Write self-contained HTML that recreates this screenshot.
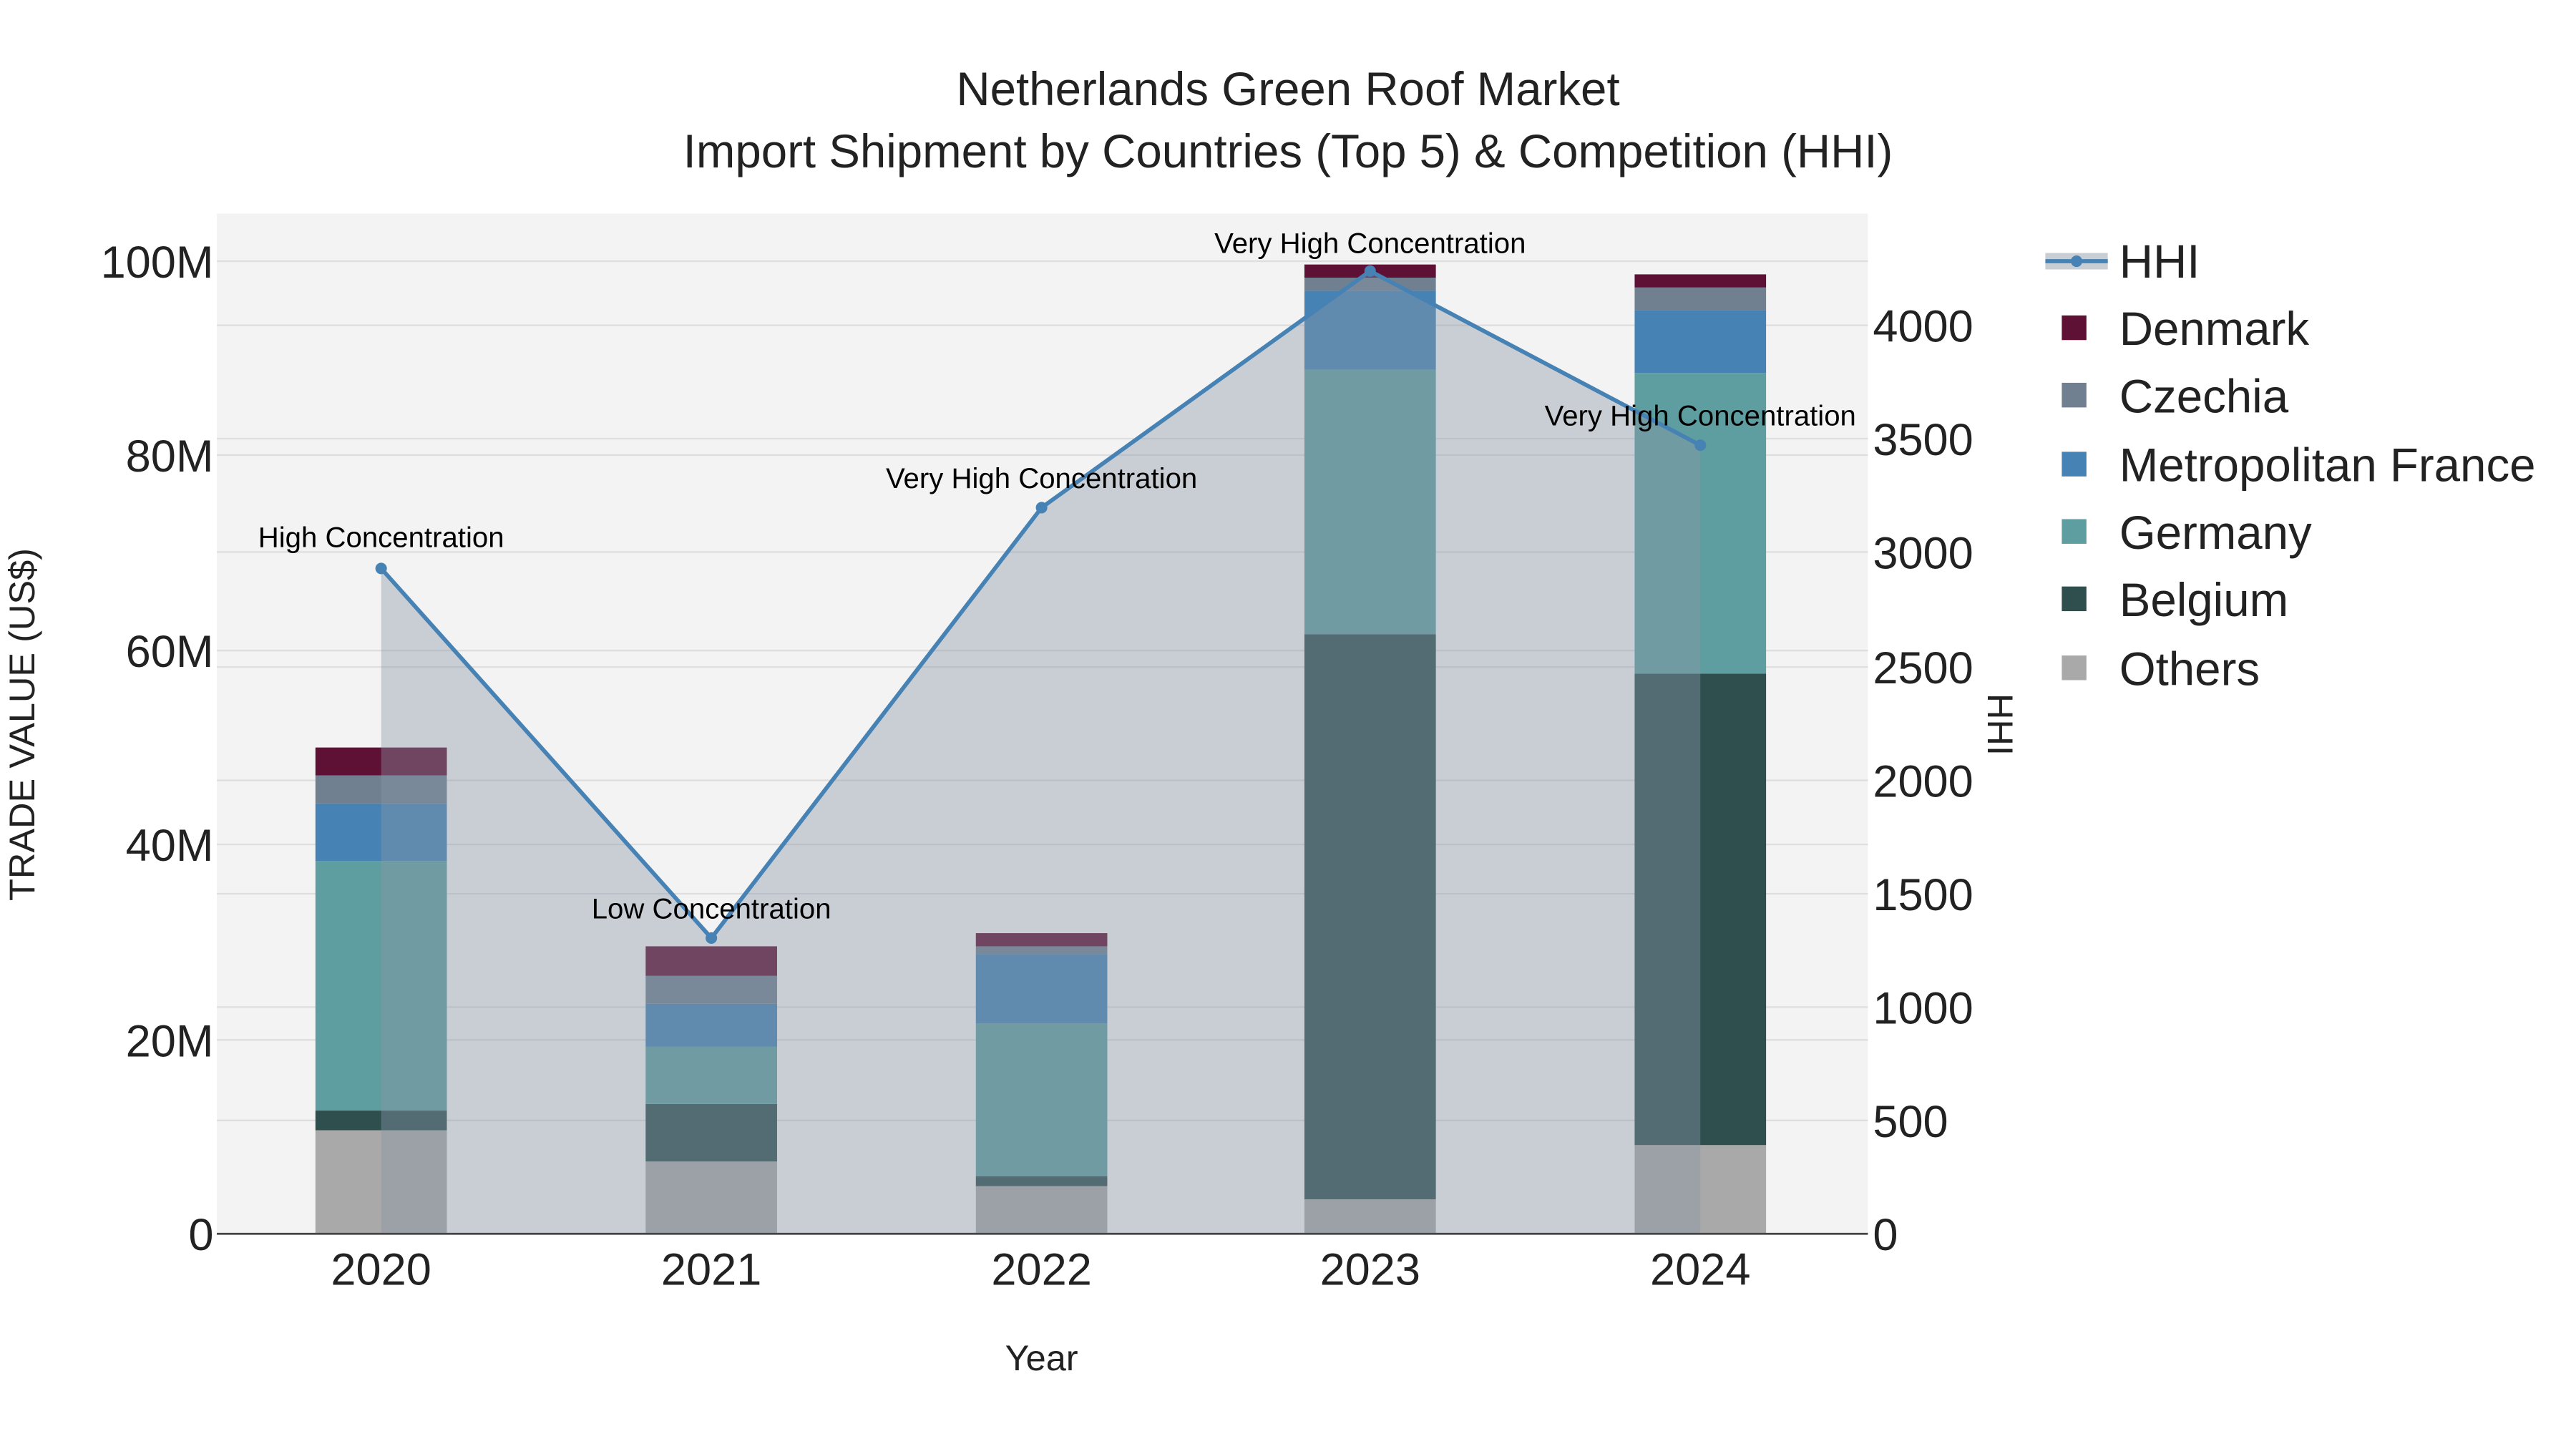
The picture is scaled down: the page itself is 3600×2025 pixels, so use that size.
<!DOCTYPE html>
<html><head><meta charset="utf-8"><style>html,body{margin:0;padding:0;background:#fff}svg{display:block}</style></head><body>
<svg width="3600" height="2025" viewBox="0 0 1568 882" xmlns="http://www.w3.org/2000/svg" font-family="Liberation Sans, sans-serif">
<rect x="0" y="0" width="1568" height="882" fill="#fff"/>
<rect x="132" y="130" width="1005" height="621" fill="#f3f3f3"/>
<g stroke="#dedede" stroke-width="1">
<line x1="132" x2="1137" y1="633" y2="633"/><line x1="132" x2="1137" y1="514" y2="514"/><line x1="132" x2="1137" y1="396" y2="396"/><line x1="132" x2="1137" y1="277" y2="277"/><line x1="132" x2="1137" y1="159" y2="159"/>
<line x1="132" x2="1137" y1="682" y2="682"/><line x1="132" x2="1137" y1="613" y2="613"/><line x1="132" x2="1137" y1="544" y2="544"/><line x1="132" x2="1137" y1="475" y2="475"/><line x1="132" x2="1137" y1="406" y2="406"/><line x1="132" x2="1137" y1="336" y2="336"/><line x1="132" x2="1137" y1="267" y2="267"/><line x1="132" x2="1137" y1="198" y2="198"/>
</g>
<g>
<rect x="192" y="688" width="80" height="63" fill="#a9a9a9"/><rect x="192" y="676" width="80" height="12" fill="#2f4f4f"/><rect x="192" y="524" width="80" height="152" fill="#5f9ea0"/><rect x="192" y="489" width="80" height="35" fill="#4682b4"/><rect x="192" y="472" width="80" height="17" fill="#708090"/><rect x="192" y="455" width="80" height="17" fill="#5e1035"/>
<rect x="393" y="707" width="80" height="44" fill="#a9a9a9"/><rect x="393" y="672" width="80" height="35" fill="#2f4f4f"/><rect x="393" y="637" width="80" height="35" fill="#5f9ea0"/><rect x="393" y="611" width="80" height="26" fill="#4682b4"/><rect x="393" y="594" width="80" height="17" fill="#708090"/><rect x="393" y="576" width="80" height="18" fill="#5e1035"/>
<rect x="594" y="722" width="80" height="29" fill="#a9a9a9"/><rect x="594" y="716" width="80" height="6" fill="#2f4f4f"/><rect x="594" y="623" width="80" height="93" fill="#5f9ea0"/><rect x="594" y="581" width="80" height="42" fill="#4682b4"/><rect x="594" y="576" width="80" height="5" fill="#708090"/><rect x="594" y="568" width="80" height="8" fill="#5e1035"/>
<rect x="794" y="730" width="80" height="21" fill="#a9a9a9"/><rect x="794" y="386" width="80" height="344" fill="#2f4f4f"/><rect x="794" y="225" width="80" height="161" fill="#5f9ea0"/><rect x="794" y="177" width="80" height="48" fill="#4682b4"/><rect x="794" y="169" width="80" height="8" fill="#708090"/><rect x="794" y="161" width="80" height="8" fill="#5e1035"/>
<rect x="995" y="697" width="80" height="54" fill="#a9a9a9"/><rect x="995" y="410" width="80" height="287" fill="#2f4f4f"/><rect x="995" y="227" width="80" height="183" fill="#5f9ea0"/><rect x="995" y="189" width="80" height="38" fill="#4682b4"/><rect x="995" y="175" width="80" height="14" fill="#708090"/><rect x="995" y="167" width="80" height="8" fill="#5e1035"/>
</g>
<polygon points="232,751 232,346 433,571 634,309 834,165 1035,271 1035,751" fill="#8a96a8" fill-opacity="0.4"/>
<polyline points="232,346 433,571 634,309 834,165 1035,271" fill="none" stroke="#4682b4" stroke-width="2.5"/>
<g fill="#4682b4"><circle cx="232" cy="346" r="3.5"/><circle cx="433" cy="571" r="3.5"/><circle cx="634" cy="309" r="3.5"/><circle cx="834" cy="165" r="3.5"/><circle cx="1035" cy="271" r="3.5"/></g>
<line x1="132" x2="1137" y1="751" y2="751" stroke="#444" stroke-width="1.2"/>
<g font-size="17.5" fill="#000" text-anchor="middle">
<text x="232" y="333">High Concentration</text><text x="433" y="559">Low Concentration</text><text x="634" y="297">Very High Concentration</text><text x="834" y="154">Very High Concentration</text><text x="1035" y="259">Very High Concentration</text>
</g>
<g font-size="27.5" fill="#222" text-anchor="end">
<text x="130" y="761">0</text><text x="130" y="643">20M</text><text x="130" y="524">40M</text><text x="130" y="406">60M</text><text x="130" y="287">80M</text><text x="130" y="169">100M</text>
</g>
<g font-size="27.5" fill="#222" text-anchor="start">
<text x="1140" y="761">0</text><text x="1140" y="692">500</text><text x="1140" y="623">1000</text><text x="1140" y="554">1500</text><text x="1140" y="485">2000</text><text x="1140" y="416">2500</text><text x="1140" y="346">3000</text><text x="1140" y="277">3500</text><text x="1140" y="208">4000</text>
</g>
<g font-size="27.5" fill="#222" text-anchor="middle">
<text x="232" y="782">2020</text><text x="433" y="782">2021</text><text x="634" y="782">2022</text><text x="834" y="782">2023</text><text x="1035" y="782">2024</text>
</g>
<text x="634" y="834" font-size="22" fill="#222" text-anchor="middle">Year</text>
<text transform="translate(21,441) rotate(-90)" font-size="22" fill="#222" text-anchor="middle">TRADE VALUE (US$)</text>
<text transform="translate(1210,441) rotate(90)" font-size="22" fill="#222" text-anchor="middle">HHI</text>
<text x="784" y="64" font-size="28.5" fill="#222" text-anchor="middle">Netherlands Green Roof Market</text>
<text x="784" y="102" font-size="28.5" fill="#222" text-anchor="middle">Import Shipment by Countries (Top 5) &amp; Competition (HHI)</text>
<rect x="1245" y="154" width="38" height="10" fill="#c9ced5"/>
<line x1="1245" x2="1283" y1="159" y2="159" stroke="#4682b4" stroke-width="2.5"/><circle cx="1264" cy="159" r="3.5" fill="#4682b4"/>
<rect x="1255" y="192" width="15" height="15" fill="#5e1035"/>
<rect x="1255" y="233" width="15" height="15" fill="#708090"/>
<rect x="1255" y="275" width="15" height="15" fill="#4682b4"/>
<rect x="1255" y="316" width="15" height="15" fill="#5f9ea0"/>
<rect x="1255" y="357" width="15" height="15" fill="#2f4f4f"/>
<rect x="1255" y="399" width="15" height="15" fill="#a9a9a9"/>
<g font-size="28.5" fill="#222">
<text x="1290" y="169">HHI</text><text x="1290" y="210">Denmark</text><text x="1290" y="251">Czechia</text><text x="1290" y="293">Metropolitan France</text><text x="1290" y="334">Germany</text><text x="1290" y="375">Belgium</text><text x="1290" y="417">Others</text>
</g>
</svg>
</body></html>
